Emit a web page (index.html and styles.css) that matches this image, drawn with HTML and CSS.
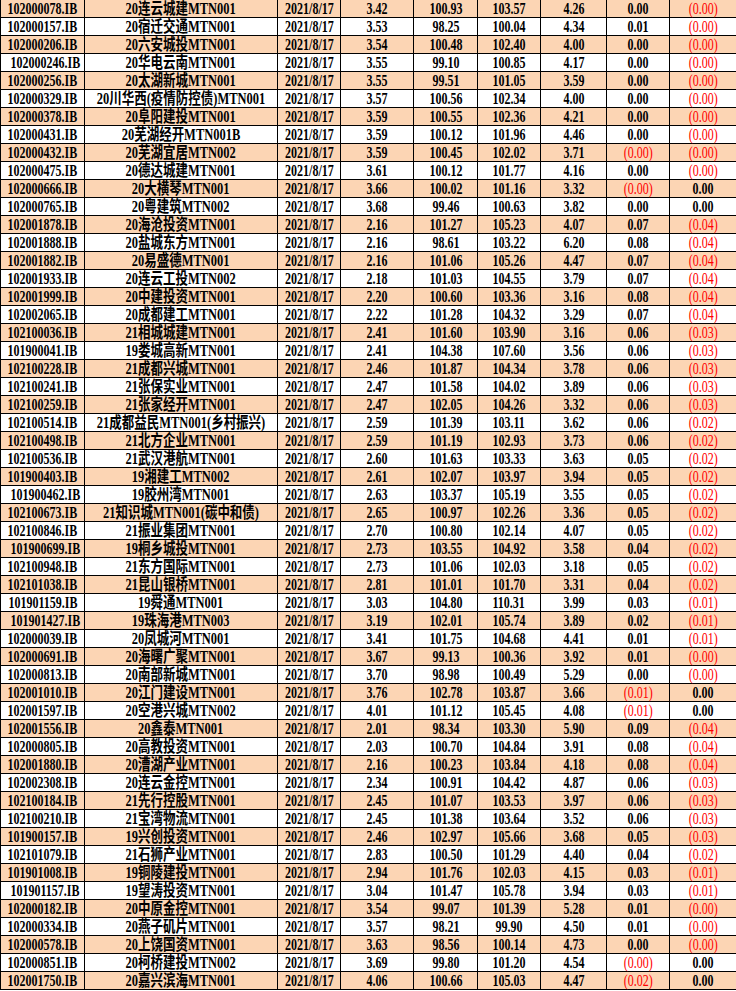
FILE: index.html
```html
<!DOCTYPE html>
<html lang="zh">
<head>
<meta charset="utf-8">
<title>MTN</title>
<link rel="stylesheet" href="styles.css">
</head>
<body>
<div class="sheet">
<div class="r o"><span><b>102000078.IB</b></span><span><b>20连云城建MTN001</b></span><span><b>2021/8/17</b></span><span><b>3.42</b></span><span><b>100.93</b></span><span><b>103.57</b></span><span><b>4.26</b></span><span><b>0.00</b></span><span class="n"><b>(0.00)</b></span></div>
<div class="r"><span><b>102000157.IB</b></span><span><b>20宿迁交通MTN001</b></span><span><b>2021/8/17</b></span><span><b>3.53</b></span><span><b>98.25</b></span><span><b>100.04</b></span><span><b>4.34</b></span><span><b>0.01</b></span><span class="n"><b>(0.00)</b></span></div>
<div class="r o"><span><b>102000206.IB</b></span><span><b>20六安城投MTN001</b></span><span><b>2021/8/17</b></span><span><b>3.54</b></span><span><b>100.48</b></span><span><b>102.40</b></span><span><b>4.00</b></span><span><b>0.00</b></span><span class="n"><b>(0.00)</b></span></div>
<div class="r"><span class="sh"><b>102000246.IB</b></span><span><b>20华电云南MTN001</b></span><span><b>2021/8/17</b></span><span><b>3.55</b></span><span><b>99.10</b></span><span><b>100.85</b></span><span><b>4.17</b></span><span><b>0.00</b></span><span class="n"><b>(0.00)</b></span></div>
<div class="r o"><span><b>102000256.IB</b></span><span><b>20太湖新城MTN001</b></span><span><b>2021/8/17</b></span><span><b>3.55</b></span><span><b>99.51</b></span><span><b>101.05</b></span><span><b>3.59</b></span><span><b>0.00</b></span><span class="n"><b>(0.00)</b></span></div>
<div class="r"><span><b>102000329.IB</b></span><span><b>20川华西(疫情防控债)MTN001</b></span><span><b>2021/8/17</b></span><span><b>3.57</b></span><span><b>100.56</b></span><span><b>102.34</b></span><span><b>4.00</b></span><span><b>0.00</b></span><span class="n"><b>(0.00)</b></span></div>
<div class="r o"><span><b>102000378.IB</b></span><span><b>20阜阳建投MTN001</b></span><span><b>2021/8/17</b></span><span><b>3.59</b></span><span><b>100.55</b></span><span><b>102.36</b></span><span><b>4.21</b></span><span><b>0.00</b></span><span class="n"><b>(0.00)</b></span></div>
<div class="r"><span><b>102000431.IB</b></span><span><b>20芜湖经开MTN001B</b></span><span><b>2021/8/17</b></span><span><b>3.59</b></span><span><b>100.12</b></span><span><b>101.96</b></span><span><b>4.46</b></span><span><b>0.00</b></span><span class="n"><b>(0.00)</b></span></div>
<div class="r o"><span><b>102000432.IB</b></span><span><b>20芜湖宜居MTN002</b></span><span><b>2021/8/17</b></span><span><b>3.59</b></span><span><b>100.45</b></span><span><b>102.02</b></span><span><b>3.71</b></span><span class="n"><b>(0.00)</b></span><span class="n"><b>(0.00)</b></span></div>
<div class="r"><span><b>102000475.IB</b></span><span><b>20德达城建MTN001</b></span><span><b>2021/8/17</b></span><span><b>3.61</b></span><span><b>100.12</b></span><span><b>101.77</b></span><span><b>4.16</b></span><span><b>0.00</b></span><span class="n"><b>(0.00)</b></span></div>
<div class="r o"><span><b>102000666.IB</b></span><span><b>20大横琴MTN001</b></span><span><b>2021/8/17</b></span><span><b>3.66</b></span><span><b>100.02</b></span><span><b>101.16</b></span><span><b>3.32</b></span><span class="n"><b>(0.00)</b></span><span><b>0.00</b></span></div>
<div class="r"><span><b>102000765.IB</b></span><span><b>20粤建筑MTN002</b></span><span><b>2021/8/17</b></span><span><b>3.68</b></span><span><b>99.46</b></span><span><b>100.63</b></span><span><b>3.82</b></span><span><b>0.00</b></span><span><b>0.00</b></span></div>
<div class="r o"><span><b>102001878.IB</b></span><span><b>20海沧投资MTN001</b></span><span><b>2021/8/17</b></span><span><b>2.16</b></span><span><b>101.27</b></span><span><b>105.23</b></span><span><b>4.07</b></span><span><b>0.07</b></span><span class="n"><b>(0.04)</b></span></div>
<div class="r"><span><b>102001888.IB</b></span><span><b>20盐城东方MTN001</b></span><span><b>2021/8/17</b></span><span><b>2.16</b></span><span><b>98.61</b></span><span><b>103.22</b></span><span><b>6.20</b></span><span><b>0.08</b></span><span class="n"><b>(0.04)</b></span></div>
<div class="r o"><span><b>102001882.IB</b></span><span><b>20易盛德MTN001</b></span><span><b>2021/8/17</b></span><span><b>2.16</b></span><span><b>101.06</b></span><span><b>105.26</b></span><span><b>4.47</b></span><span><b>0.07</b></span><span class="n"><b>(0.04)</b></span></div>
<div class="r"><span><b>102001933.IB</b></span><span><b>20连云工投MTN002</b></span><span><b>2021/8/17</b></span><span><b>2.18</b></span><span><b>101.03</b></span><span><b>104.55</b></span><span><b>3.79</b></span><span><b>0.07</b></span><span class="n"><b>(0.04)</b></span></div>
<div class="r o"><span><b>102001999.IB</b></span><span><b>20中建投资MTN001</b></span><span><b>2021/8/17</b></span><span><b>2.20</b></span><span><b>100.60</b></span><span><b>103.36</b></span><span><b>3.16</b></span><span><b>0.08</b></span><span class="n"><b>(0.04)</b></span></div>
<div class="r"><span><b>102002065.IB</b></span><span><b>20成都建工MTN001</b></span><span><b>2021/8/17</b></span><span><b>2.22</b></span><span><b>101.28</b></span><span><b>104.32</b></span><span><b>3.29</b></span><span><b>0.07</b></span><span class="n"><b>(0.04)</b></span></div>
<div class="r o"><span><b>102100036.IB</b></span><span><b>21相城城建MTN001</b></span><span><b>2021/8/17</b></span><span><b>2.41</b></span><span><b>101.60</b></span><span><b>103.90</b></span><span><b>3.16</b></span><span><b>0.06</b></span><span class="n"><b>(0.03)</b></span></div>
<div class="r"><span><b>101900041.IB</b></span><span><b>19娄城高新MTN001</b></span><span><b>2021/8/17</b></span><span><b>2.41</b></span><span><b>104.38</b></span><span><b>107.60</b></span><span><b>3.56</b></span><span><b>0.06</b></span><span class="n"><b>(0.03)</b></span></div>
<div class="r o"><span><b>102100228.IB</b></span><span><b>21成都兴城MTN001</b></span><span><b>2021/8/17</b></span><span><b>2.46</b></span><span><b>101.87</b></span><span><b>104.34</b></span><span><b>3.78</b></span><span><b>0.06</b></span><span class="n"><b>(0.03)</b></span></div>
<div class="r"><span><b>102100241.IB</b></span><span><b>21张保实业MTN001</b></span><span><b>2021/8/17</b></span><span><b>2.47</b></span><span><b>101.58</b></span><span><b>104.02</b></span><span><b>3.89</b></span><span><b>0.06</b></span><span class="n"><b>(0.03)</b></span></div>
<div class="r o"><span><b>102100259.IB</b></span><span><b>21张家经开MTN001</b></span><span><b>2021/8/17</b></span><span><b>2.47</b></span><span><b>102.05</b></span><span><b>104.26</b></span><span><b>3.32</b></span><span><b>0.06</b></span><span class="n"><b>(0.03)</b></span></div>
<div class="r"><span><b>102100514.IB</b></span><span><b>21成都益民MTN001(乡村振兴)</b></span><span><b>2021/8/17</b></span><span><b>2.59</b></span><span><b>101.39</b></span><span><b>103.11</b></span><span><b>3.62</b></span><span><b>0.06</b></span><span class="n"><b>(0.02)</b></span></div>
<div class="r o"><span><b>102100498.IB</b></span><span><b>21北方企业MTN001</b></span><span><b>2021/8/17</b></span><span><b>2.59</b></span><span><b>101.19</b></span><span><b>102.93</b></span><span><b>3.73</b></span><span><b>0.06</b></span><span class="n"><b>(0.02)</b></span></div>
<div class="r"><span><b>102100536.IB</b></span><span><b>21武汉港航MTN001</b></span><span><b>2021/8/17</b></span><span><b>2.60</b></span><span><b>101.63</b></span><span><b>103.33</b></span><span><b>3.63</b></span><span><b>0.05</b></span><span class="n"><b>(0.02)</b></span></div>
<div class="r o"><span><b>101900403.IB</b></span><span><b>19湘建工MTN002</b></span><span><b>2021/8/17</b></span><span><b>2.61</b></span><span><b>102.07</b></span><span><b>103.97</b></span><span><b>3.94</b></span><span><b>0.05</b></span><span class="n"><b>(0.02)</b></span></div>
<div class="r"><span class="sh"><b>101900462.IB</b></span><span><b>19胶州湾MTN001</b></span><span><b>2021/8/17</b></span><span><b>2.63</b></span><span><b>103.37</b></span><span><b>105.19</b></span><span><b>3.55</b></span><span><b>0.05</b></span><span class="n"><b>(0.02)</b></span></div>
<div class="r o"><span><b>102100673.IB</b></span><span><b>21知识城MTN001(碳中和债)</b></span><span><b>2021/8/17</b></span><span><b>2.65</b></span><span><b>100.97</b></span><span><b>102.26</b></span><span><b>3.36</b></span><span><b>0.05</b></span><span class="n"><b>(0.02)</b></span></div>
<div class="r"><span><b>102100846.IB</b></span><span><b>21振业集团MTN001</b></span><span><b>2021/8/17</b></span><span><b>2.70</b></span><span><b>100.80</b></span><span><b>102.14</b></span><span><b>4.07</b></span><span><b>0.05</b></span><span class="n"><b>(0.02)</b></span></div>
<div class="r o"><span class="sh"><b>101900699.IB</b></span><span><b>19桐乡城投MTN001</b></span><span><b>2021/8/17</b></span><span><b>2.73</b></span><span><b>103.55</b></span><span><b>104.92</b></span><span><b>3.58</b></span><span><b>0.04</b></span><span class="n"><b>(0.02)</b></span></div>
<div class="r"><span><b>102100948.IB</b></span><span><b>21东方国际MTN001</b></span><span><b>2021/8/17</b></span><span><b>2.73</b></span><span><b>101.06</b></span><span><b>102.03</b></span><span><b>3.18</b></span><span><b>0.05</b></span><span class="n"><b>(0.02)</b></span></div>
<div class="r o"><span><b>102101038.IB</b></span><span><b>21昆山银桥MTN001</b></span><span><b>2021/8/17</b></span><span><b>2.81</b></span><span><b>101.01</b></span><span><b>101.70</b></span><span><b>3.31</b></span><span><b>0.04</b></span><span class="n"><b>(0.02)</b></span></div>
<div class="r"><span><b>101901159.IB</b></span><span><b>19舜通MTN001</b></span><span><b>2021/8/17</b></span><span><b>3.03</b></span><span><b>104.80</b></span><span><b>110.31</b></span><span><b>3.99</b></span><span><b>0.03</b></span><span class="n"><b>(0.01)</b></span></div>
<div class="r o"><span class="sh"><b>101901427.IB</b></span><span><b>19珠海港MTN003</b></span><span><b>2021/8/17</b></span><span><b>3.19</b></span><span><b>102.01</b></span><span><b>105.74</b></span><span><b>3.89</b></span><span><b>0.02</b></span><span class="n"><b>(0.01)</b></span></div>
<div class="r"><span><b>102000039.IB</b></span><span><b>20凤城河MTN001</b></span><span><b>2021/8/17</b></span><span><b>3.41</b></span><span><b>101.75</b></span><span><b>104.68</b></span><span><b>4.41</b></span><span><b>0.01</b></span><span class="n"><b>(0.01)</b></span></div>
<div class="r o"><span><b>102000691.IB</b></span><span><b>20海曙广聚MTN001</b></span><span><b>2021/8/17</b></span><span><b>3.67</b></span><span><b>99.13</b></span><span><b>100.36</b></span><span><b>3.92</b></span><span><b>0.01</b></span><span class="n"><b>(0.00)</b></span></div>
<div class="r"><span><b>102000813.IB</b></span><span><b>20南部新城MTN001</b></span><span><b>2021/8/17</b></span><span><b>3.70</b></span><span><b>98.98</b></span><span><b>100.49</b></span><span><b>5.29</b></span><span><b>0.00</b></span><span class="n"><b>(0.00)</b></span></div>
<div class="r o"><span><b>102001010.IB</b></span><span><b>20江门建设MTN001</b></span><span><b>2021/8/17</b></span><span><b>3.76</b></span><span><b>102.78</b></span><span><b>103.87</b></span><span><b>3.66</b></span><span class="n"><b>(0.01)</b></span><span><b>0.00</b></span></div>
<div class="r"><span><b>102001597.IB</b></span><span><b>20空港兴城MTN002</b></span><span><b>2021/8/17</b></span><span><b>4.01</b></span><span><b>101.12</b></span><span><b>105.45</b></span><span><b>4.08</b></span><span class="n"><b>(0.01)</b></span><span><b>0.00</b></span></div>
<div class="r o"><span><b>102001556.IB</b></span><span><b>20鑫泰MTN001</b></span><span><b>2021/8/17</b></span><span><b>2.01</b></span><span><b>98.34</b></span><span><b>103.30</b></span><span><b>5.90</b></span><span><b>0.09</b></span><span class="n"><b>(0.04)</b></span></div>
<div class="r"><span><b>102000805.IB</b></span><span><b>20高教投资MTN001</b></span><span><b>2021/8/17</b></span><span><b>2.03</b></span><span><b>100.70</b></span><span><b>104.84</b></span><span><b>3.91</b></span><span><b>0.08</b></span><span class="n"><b>(0.04)</b></span></div>
<div class="r o"><span><b>102001880.IB</b></span><span><b>20漕湖产业MTN001</b></span><span><b>2021/8/17</b></span><span><b>2.16</b></span><span><b>100.23</b></span><span><b>103.84</b></span><span><b>4.18</b></span><span><b>0.08</b></span><span class="n"><b>(0.04)</b></span></div>
<div class="r"><span><b>102002308.IB</b></span><span><b>20连云金控MTN001</b></span><span><b>2021/8/17</b></span><span><b>2.34</b></span><span><b>100.91</b></span><span><b>104.42</b></span><span><b>4.87</b></span><span><b>0.06</b></span><span class="n"><b>(0.03)</b></span></div>
<div class="r o"><span><b>102100184.IB</b></span><span><b>21先行控股MTN001</b></span><span><b>2021/8/17</b></span><span><b>2.45</b></span><span><b>101.07</b></span><span><b>103.53</b></span><span><b>3.97</b></span><span><b>0.06</b></span><span class="n"><b>(0.03)</b></span></div>
<div class="r"><span><b>102100210.IB</b></span><span><b>21宝湾物流MTN001</b></span><span><b>2021/8/17</b></span><span><b>2.45</b></span><span><b>101.38</b></span><span><b>103.64</b></span><span><b>3.52</b></span><span><b>0.06</b></span><span class="n"><b>(0.03)</b></span></div>
<div class="r o"><span><b>101900157.IB</b></span><span><b>19兴创投资MTN001</b></span><span><b>2021/8/17</b></span><span><b>2.46</b></span><span><b>102.97</b></span><span><b>105.66</b></span><span><b>3.68</b></span><span><b>0.05</b></span><span class="n"><b>(0.03)</b></span></div>
<div class="r"><span><b>102101079.IB</b></span><span><b>21石狮产业MTN001</b></span><span><b>2021/8/17</b></span><span><b>2.83</b></span><span><b>100.50</b></span><span><b>101.29</b></span><span><b>4.40</b></span><span><b>0.04</b></span><span class="n"><b>(0.02)</b></span></div>
<div class="r o"><span><b>101901008.IB</b></span><span><b>19铜陵建投MTN001</b></span><span><b>2021/8/17</b></span><span><b>2.94</b></span><span><b>101.76</b></span><span><b>102.03</b></span><span><b>4.15</b></span><span><b>0.03</b></span><span class="n"><b>(0.01)</b></span></div>
<div class="r"><span class="sh"><b>101901157.IB</b></span><span><b>19望涛投资MTN001</b></span><span><b>2021/8/17</b></span><span><b>3.04</b></span><span><b>101.47</b></span><span><b>105.78</b></span><span><b>3.94</b></span><span><b>0.03</b></span><span class="n"><b>(0.01)</b></span></div>
<div class="r o"><span><b>102000182.IB</b></span><span><b>20中原金控MTN001</b></span><span><b>2021/8/17</b></span><span><b>3.54</b></span><span><b>99.07</b></span><span><b>101.39</b></span><span><b>5.28</b></span><span><b>0.01</b></span><span class="n"><b>(0.00)</b></span></div>
<div class="r"><span><b>102000334.IB</b></span><span><b>20燕子矶片MTN001</b></span><span><b>2021/8/17</b></span><span><b>3.57</b></span><span><b>98.21</b></span><span><b>99.90</b></span><span><b>4.50</b></span><span><b>0.01</b></span><span class="n"><b>(0.00)</b></span></div>
<div class="r o"><span><b>102000578.IB</b></span><span><b>20上饶国资MTN001</b></span><span><b>2021/8/17</b></span><span><b>3.63</b></span><span><b>98.56</b></span><span><b>100.14</b></span><span><b>4.73</b></span><span><b>0.00</b></span><span class="n"><b>(0.00)</b></span></div>
<div class="r"><span><b>102000851.IB</b></span><span><b>20柯桥建投MTN002</b></span><span><b>2021/8/17</b></span><span><b>3.69</b></span><span><b>99.80</b></span><span><b>101.20</b></span><span><b>4.54</b></span><span class="n"><b>(0.00)</b></span><span><b>0.00</b></span></div>
<div class="r o"><span><b>102001750.IB</b></span><span><b>20嘉兴滨海MTN001</b></span><span><b>2021/8/17</b></span><span><b>4.06</b></span><span><b>100.66</b></span><span><b>105.03</b></span><span><b>4.47</b></span><span class="n"><b>(0.02)</b></span><span><b>0.00</b></span></div>
</div>
</body>
</html>
```

FILE: styles.css
```css
html, body {
  margin: 0;
  padding: 0;
  background: #ffffff;
}

.sheet {
  width: 736px;
  display: flex;
  flex-direction: column;
  gap: 1px;
  background: #000000;
  padding: 0 0 1px 1px;
  box-sizing: border-box;
  overflow: hidden;
}

.r {
  display: grid;
  grid-template-columns: 83px 192px 62px 72px 63px 62px 65px 62px 66px;
  column-gap: 1px;
  height: 17px;
}

.r > span {
  display: flex;
  align-items: center;
  justify-content: center;
  background: #ffffff;
  white-space: nowrap;
  font-family: "Liberation Serif", "Noto Sans CJK SC", serif;
  font-weight: 700;
  font-size: 16px;
  line-height: 17px;
  color: #000000;
  overflow: visible;
  min-width: 0;
}

.r.o > span {
  background: #fcd5b4;
}

.r > span > b {
  display: inline-block;
  font-weight: 700;
  transform: scaleX(0.75);
  transform-origin: 50% 50%;
}

.r > span:nth-child(2) > b {
  transform: scaleX(0.78);
}

.r > span.n {
  color: #ff0000;
}

.r > span.n > b {
  font-weight: 400;
}

.r > span.sh {
  padding-left: 5px;
}
```
